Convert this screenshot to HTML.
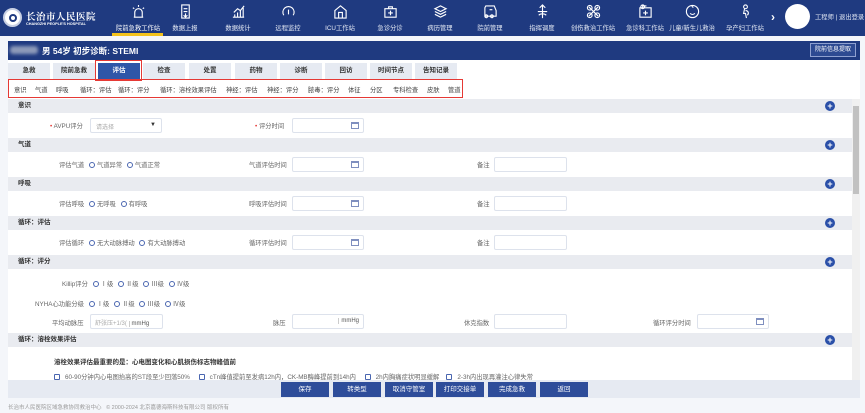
<!DOCTYPE html>
<html><head><meta charset="utf-8"><style>
*{margin:0;padding:0;box-sizing:border-box}
body{width:865px;height:413px;overflow:hidden;background:#f4f6fa;font-family:"Liberation Sans","Noto Sans CJK SC",sans-serif;font-size:7px;color:#555;position:relative}
.a{position:absolute;white-space:nowrap}
.hdr{left:0;top:0;width:865px;height:36px;background:#1f3a80}
.nav{top:4px;width:56px;text-align:center;color:#e6ebf5;font-size:6.3px}
.nav svg{display:block;margin:0 auto 4px;width:15px;height:15px}
.tab{top:63px;height:16px;width:42px;background:#e6eaf2;color:#333;text-align:center;line-height:16px;font-size:6.5px;font-weight:bold}
.band{left:8px;width:844px;height:14px;background:#e9ebf0;color:#333;font-weight:bold;font-size:6.5px;line-height:14px;padding-left:10px}
.plus{width:10px;height:10px;border-radius:50%;background:#2a4fa8;color:#fff;font-size:9px;line-height:10px;text-align:center;font-weight:bold;left:825px}
.inp{height:15px;background:#fff;border:1px solid #dde2ec;border-radius:2px}
.lbl{color:#666;font-size:6.3px}
.cal{position:absolute;right:4px;top:3px;width:8px;height:7px;border:1px solid #7f8fbf;border-top:2px solid #7f8fbf}
.rad{display:inline-block;width:6px;height:6px;border:1px solid #4a66b0;border-radius:50%;vertical-align:-1px;margin:0 2px 0 3px}
.chk{display:inline-block;width:6px;height:6px;border:1px solid #4a66b0;border-radius:1px;vertical-align:-1px;margin-right:5px}
.btn{top:382px;height:15px;width:48px;background:#2e4d9a;color:#fff;text-align:center;line-height:15px;font-size:6.5px}
.sn{top:85px;font-size:6.3px;color:#444}
</style></head><body>
<div class="a hdr"></div>
<div class="a" style="left:3px;top:8px;width:19px;height:19px;border-radius:50%;background:#fff;border:2px solid #c8d0e4"><div style="margin:4px;width:8px;height:8px;border-radius:50%;border:2px solid #1f3a80"></div></div>
<div class="a" style="left:26px;top:9px;color:#fff;font-size:9.5px;font-weight:bold;letter-spacing:0.5px;font-family:'Noto Serif CJK SC',serif">长治市人民医院</div>
<div class="a" style="left:26px;top:22px;color:#fff;font-size:3.8px;font-weight:bold">CHANGZHI PEOPLE'S HOSPITAL</div>

<div class="a nav" style="left:110px;color:#fff">
<svg viewBox="0 0 16 16" fill="none" stroke="#fff" stroke-width="1.2"><path d="M3 14h10M4 14v-5a4 4 0 0 1 8 0v5M8 1v2M2 4l1.5 1M14 4l-1.5 1"/></svg>院前急救工作站</div>
<div class="a" style="left:112px;top:33px;width:51px;height:3px;background:#f3c21b"></div>
<div class="a nav" style="left:157px"><svg viewBox="0 0 16 16" fill="none" stroke="#fff" stroke-width="1.2"><path d="M4 1h8v14H4zM6 5h4M6 8h4M8 10v4M6 12l2 2 2-2"/></svg>数据上报</div>
<div class="a nav" style="left:210px"><svg viewBox="0 0 16 16" fill="none" stroke="#fff" stroke-width="1.2"><path d="M2 14h12M4 14v-3M7 14V9M10 14V7M13 14V4M3 9l4-4 3 2 4-5"/></svg>数据统计</div>
<div class="a nav" style="left:260px"><svg viewBox="0 0 16 16" fill="none" stroke="#fff" stroke-width="1.2"><path d="M3 12a6 6 0 1 1 10 0M8 6v5M5 10h0M11 10h0"/></svg>远程监控</div>
<div class="a nav" style="left:312px"><svg viewBox="0 0 16 16" fill="none" stroke="#fff" stroke-width="1.2"><path d="M2 7l6-5 6 5v8H2zM6 15V9h4v6"/></svg>ICU工作站</div>
<div class="a nav" style="left:362px"><svg viewBox="0 0 16 16" fill="none" stroke="#fff" stroke-width="1.2"><path d="M2 5h12v9H2zM6 5V3h4v2M8 7v5M5.5 9.5h5"/></svg>急诊分诊</div>
<div class="a nav" style="left:412px"><svg viewBox="0 0 16 16" fill="none" stroke="#fff" stroke-width="1.2"><path d="M8 2l6 3-6 3-6-3zM2 8l6 3 6-3M2 11l6 3 6-3"/></svg>病历管理</div>
<div class="a nav" style="left:462px"><svg viewBox="0 0 16 16" fill="none" stroke="#fff" stroke-width="1.2"><path d="M3 2h9l2 5v6H2V4zM5 13a1.5 1.5 0 1 0 0 .1M11 13a1.5 1.5 0 1 0 0 .1M7 6h3"/></svg>院前管理</div>
<div class="a nav" style="left:514px"><svg viewBox="0 0 16 16" fill="none" stroke="#fff" stroke-width="1.2"><path d="M8 1v14M5 4l3-3 3 3M3 8h10M4 12c2-2 6-2 8 0"/></svg>指挥调度</div>
<div class="a nav" style="left:565px"><svg viewBox="0 0 16 16" fill="none" stroke="#fff" stroke-width="1.2"><path d="M3 3l10 10M13 3L3 13"/><circle cx="4" cy="4" r="2.5"/><circle cx="12" cy="12" r="2.5"/><circle cx="12" cy="4" r="2.5"/><circle cx="4" cy="12" r="2.5"/></svg>创伤救治工作站</div>
<div class="a nav" style="left:617px"><svg viewBox="0 0 16 16" fill="none" stroke="#fff" stroke-width="1.2"><path d="M2 4h12v10H2zM5 4V2h4M8 7v5M5.5 9.5h5"/><circle cx="5" cy="3" r="2"/></svg>急诊科工作站</div>
<div class="a nav" style="left:664px"><svg viewBox="0 0 16 16" fill="none" stroke="#fff" stroke-width="1.2"><circle cx="8" cy="8" r="6.5"/><path d="M6 6h0M10 6h0M5.5 10c1.5 1.5 3.5 1.5 5 0M8 1.5c-1 1 0 2 1 2"/></svg>儿童/新生儿救治</div>
<div class="a nav" style="left:717px"><svg viewBox="0 0 16 16" fill="none" stroke="#fff" stroke-width="1.2"><circle cx="8" cy="3" r="2"/><path d="M7 5l-1 5h2l1 5M8 7c3 0 4 3 2 5"/></svg>孕产妇工作站</div>
<div class="a" style="left:771px;top:10px;color:#fff;font-size:12px;font-weight:bold">›</div>
<div class="a" style="left:785px;top:4px;width:25px;height:25px;border-radius:50%;background:#fff"></div>
<div class="a" style="left:815px;top:12px;color:#dfe5f2;font-size:6.3px">工程师 | 退出登录</div>

<div class="a" style="left:8px;top:41px;width:852px;height:19px;background:#1f3a80"></div>
<div class="a" style="left:10px;top:46px;width:28px;height:8px;background:#8d9ab9;border-radius:3px;filter:blur(1.5px)"></div>
<div class="a" style="left:42px;top:45px;color:#fff;font-size:8.5px;font-weight:bold">男 54岁 初步诊断: STEMI</div>
<div class="a" style="left:810px;top:43px;width:46px;height:14px;border:1px solid #8ea0d0;background:#2d4a92;color:#fff;font-size:6px;text-align:center;line-height:12px">院前信息提取</div>

<div class="a" style="left:8px;top:60px;width:852px;height:40px;background:#fff"></div>
<div class="a tab" style="left:8px">急救</div>
<div class="a tab" style="left:53px">院前急救</div>
<div class="a tab" style="left:98px;background:#2e56a8;color:#fff">评估</div>
<div class="a tab" style="left:143px">检查</div>
<div class="a tab" style="left:189px">处置</div>
<div class="a tab" style="left:235px">药物</div>
<div class="a tab" style="left:280px">诊断</div>
<div class="a tab" style="left:325px">回访</div>
<div class="a tab" style="left:370px">时间节点</div>
<div class="a tab" style="left:415px">告知记录</div>
<div class="a" style="left:95px;top:60px;width:47px;height:21px;border:1.5px solid #e53935"></div>
<div class="a" style="left:8px;top:79px;width:455px;height:19px;border:1.5px solid #e53935"></div>
<div class="a sn" style="left:14px">意识</div>
<div class="a sn" style="left:35px">气道</div>
<div class="a sn" style="left:56px">呼吸</div>
<div class="a sn" style="left:80px">循环：评估</div>
<div class="a sn" style="left:118px">循环：评分</div>
<div class="a sn" style="left:160px">循环：溶栓效果评估</div>
<div class="a sn" style="left:226px">神经：评估</div>
<div class="a sn" style="left:267px">神经：评分</div>
<div class="a sn" style="left:308px">脓毒：评分</div>
<div class="a sn" style="left:348px">体征</div>
<div class="a sn" style="left:370px">分区</div>
<div class="a sn" style="left:393px">专科检查</div>
<div class="a sn" style="left:427px">皮肤</div>
<div class="a sn" style="left:448px">管道</div>

<div class="a" style="left:8px;top:99px;width:844px;height:281px;background:#fff"></div>
<div class="a" style="left:852px;top:99px;width:8px;height:281px;background:#f0f0f0"></div>
<div class="a" style="left:853px;top:106px;width:6px;height:88px;background:#c1c1c1"></div>

<div class="a band" style="top:99px">意识</div><div class="a plus" style="top:101px">+</div>
<div class="a lbl" style="left:50px;top:121px"><span style="color:#e53935">•</span> AVPU评分</div>
<div class="a inp" style="left:90px;top:118px;width:72px;color:#aaa;padding:3px 5px;font-size:6px">请选择<span style="position:absolute;right:5px;top:3px;color:#333">▼</span></div>
<div class="a lbl" style="left:255px;top:121px"><span style="color:#e53935">•</span> 评分时间</div>
<div class="a inp" style="left:292px;top:118px;width:72px"><div class="cal"></div></div>

<div class="a band" style="top:138px">气道</div><div class="a plus" style="top:140px">+</div>
<div class="a lbl" style="left:59px;top:160px">评估气道 <span class="rad"></span>气道异常 <span class="rad"></span>气道正常</div>
<div class="a lbl" style="left:249px;top:160px">气道评估时间</div>
<div class="a inp" style="left:292px;top:157px;width:72px"><div class="cal"></div></div>
<div class="a lbl" style="left:477px;top:160px">备注</div>
<div class="a inp" style="left:494px;top:157px;width:73px"></div>

<div class="a band" style="top:177px">呼吸</div><div class="a plus" style="top:179px">+</div>
<div class="a lbl" style="left:59px;top:199px">评估呼吸 <span class="rad"></span>无呼吸 <span class="rad"></span>有呼吸</div>
<div class="a lbl" style="left:249px;top:199px">呼吸评估时间</div>
<div class="a inp" style="left:292px;top:196px;width:72px"><div class="cal"></div></div>
<div class="a lbl" style="left:477px;top:199px">备注</div>
<div class="a inp" style="left:494px;top:196px;width:73px"></div>

<div class="a band" style="top:216px">循环：评估</div><div class="a plus" style="top:218px">+</div>
<div class="a lbl" style="left:59px;top:238px">评估循环 <span class="rad"></span>无大动脉搏动 <span class="rad"></span>有大动脉搏动</div>
<div class="a lbl" style="left:249px;top:238px">循环评估时间</div>
<div class="a inp" style="left:292px;top:235px;width:72px"><div class="cal"></div></div>
<div class="a lbl" style="left:477px;top:238px">备注</div>
<div class="a inp" style="left:494px;top:235px;width:73px"></div>

<div class="a band" style="top:255px">循环：评分</div><div class="a plus" style="top:257px">+</div>
<div class="a lbl" style="left:62px;top:279px">Killip评分 <span class="rad"></span>Ⅰ级 <span class="rad"></span>Ⅱ级 <span class="rad"></span>Ⅲ级 <span class="rad"></span>Ⅳ级</div>
<div class="a lbl" style="left:35px;top:299px">NYHA心功能分级 <span class="rad"></span>Ⅰ级 <span class="rad"></span>Ⅱ级 <span class="rad"></span>Ⅲ级 <span class="rad"></span>Ⅳ级</div>
<div class="a lbl" style="left:52px;top:318px">平均动脉压</div>
<div class="a inp" style="left:90px;top:314px;width:73px;font-size:6px;padding:3px 4px;color:#aaa">舒张压+1/3( <span style="color:#555;border-left:1px solid #ccc;padding-left:2px">mmHg</span></div>
<div class="a lbl" style="left:273px;top:318px">脉压</div>
<div class="a inp" style="left:292px;top:314px;width:72px"><span style="position:absolute;right:4px;top:3px;font-size:6px;border-left:1px solid #ccc;padding-left:2px">mmHg</span></div>
<div class="a lbl" style="left:464px;top:318px">休克指数</div>
<div class="a inp" style="left:494px;top:314px;width:73px"></div>
<div class="a lbl" style="left:653px;top:318px">循环评分时间</div>
<div class="a inp" style="left:697px;top:314px;width:72px"><div class="cal"></div></div>

<div class="a band" style="top:333px">循环：溶栓效果评估</div><div class="a plus" style="top:335px">+</div>
<div class="a" style="left:54px;top:356px;font-size:6.5px;font-weight:bold;color:#333">溶栓效果评估最重要的是：心电图变化和心肌损伤标志物峰值前</div>
<div class="a lbl" style="left:54px;top:372px"><span class="chk"></span>60-90分钟内心电图抬高的ST段至少回落50%&nbsp;&nbsp;&nbsp;&nbsp;&nbsp;<span class="chk"></span>cTn峰值提前至发病12h内，CK-MB酶峰提前到14h内&nbsp;&nbsp;&nbsp;&nbsp;&nbsp;<span class="chk"></span>2h内胸痛症状明显缓解&nbsp;&nbsp;&nbsp;&nbsp;<span class="chk"></span>2-3h内出现再灌注心律失常</div>

<div class="a" style="left:8px;top:380px;width:852px;height:18px;background:#e6eaf2"></div>
<div class="a btn" style="left:281px">保存</div>
<div class="a btn" style="left:333px">转类型</div>
<div class="a btn" style="left:385px">取消守管室</div>
<div class="a btn" style="left:436px">打印交接单</div>
<div class="a btn" style="left:488px">完成急救</div>
<div class="a btn" style="left:540px">返回</div>
<div class="a" style="left:8px;top:403px;font-size:5.5px;color:#999">长治市人民医院区域急救协同救治中心&nbsp;&nbsp;&nbsp;© 2000-2024 北京嘉德海斯科技有限公司 版权所有</div>
</body></html>
